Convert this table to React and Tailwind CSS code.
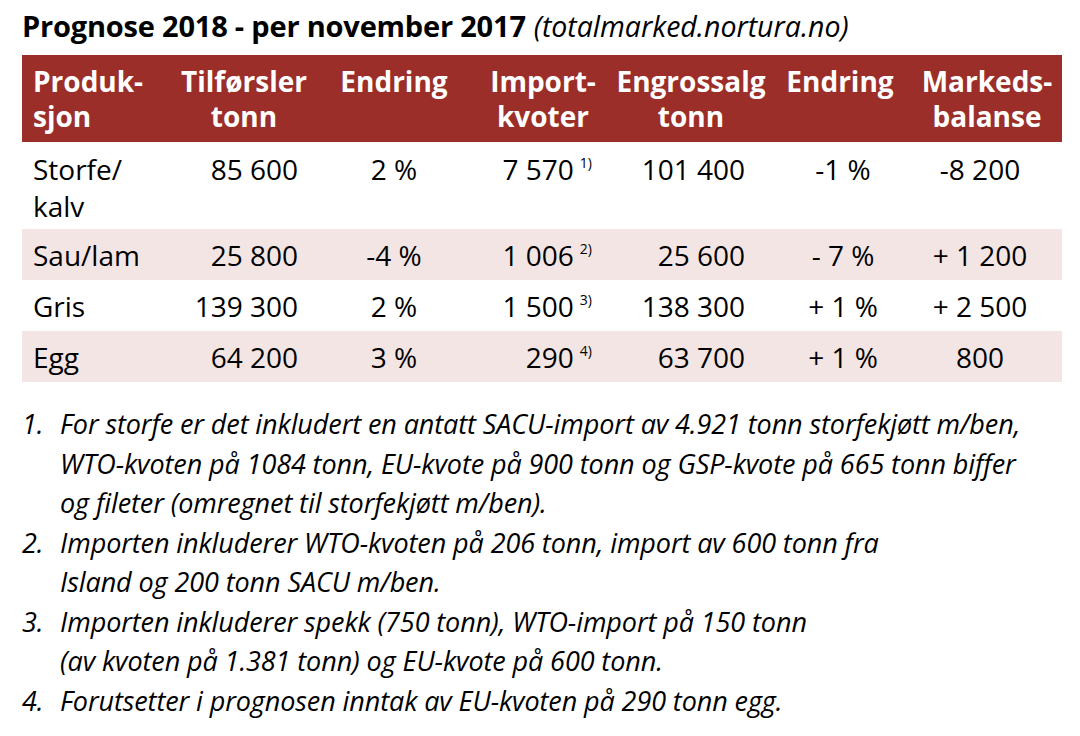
import React from 'react';

const cols = 'grid grid-cols-[150px_144px_156px_142px_154px_144px_150px]';

const rows = [
  { name: ['Storfe/', 'kalv'], tilf: '85 600', endr: '2 %', imp: '7 570', note: '1)', salg: '101 400', endr2: '-1 %', bal: '-8 200', tall: true },
  { name: ['Sau/lam'], tilf: '25 800', endr: '-4 %', imp: '1 006', note: '2)', salg: '25 600', endr2: '- 7 %', bal: '+ 1 200', pink: true },
  { name: ['Gris'], tilf: '139 300', endr: '2 %', imp: '1 500', note: '3)', salg: '138 300', endr2: '+ 1 %', bal: '+ 2 500' },
  { name: ['Egg'], tilf: '64 200', endr: '3 %', imp: '290', note: '4)', salg: '63 700', endr2: '+ 1 %', bal: '800', pink: true },
];

const notes = [
  ['For storfe er det inkludert en antatt SACU-import av 4.921 tonn storfekjøtt m/ben,', 'WTO-kvoten på 1084 tonn, EU-kvote på 900 tonn og GSP-kvote på 665 tonn biffer', 'og fileter (omregnet til storfekjøtt m/ben).'],
  ['Importen inkluderer WTO-kvoten på 206 tonn, import av 600 tonn fra', 'Island og 200 tonn SACU m/ben.'],
  ['Importen inkluderer spekk (750 tonn), WTO-import på 150 tonn', '(av kvoten på 1.381 tonn) og EU-kvote på 600 tonn.'],
  ['Forutsetter i prognosen inntak av EU-kvoten på 290 tonn egg.'],
];

export default function App() {
  return (
    <div className="w-[1080px] h-[736px] bg-white text-black font-['Open_Sans',sans-serif] px-[22px] pt-[6px]">
      {/* Tittel */}
      <div className="h-[49px] whitespace-nowrap leading-[40px]">
        <span className="text-[29px] font-bold tracking-[-0.2px]">Prognose 2018 - per november 2017</span>
        <span className="text-[28.5px] italic ml-[8px]">(totalmarked.nortura.no)</span>
      </div>

      {/* Tabell */}
      <div className="w-[1040px]">
        <div className={`${cols} bg-[#9c2e29] text-white font-bold text-[28px] leading-[35px] h-[87px] pt-[9px]`}>
          <div className="pl-[11px]">Produk-<br />sjon</div>
          <div className="text-center">Tilførsler<br />tonn</div>
          <div className="text-center">Endring</div>
          <div className="text-center">Import-<br />kvoter</div>
          <div className="text-center">Engrossalg<br />tonn</div>
          <div className="text-center">Endring</div>
          <div className="text-center">Markeds-<br />balanse</div>
        </div>

        {rows.map((r, i) => (
          <div
            key={i}
            className={`${cols} text-[28px] leading-[37px] ${r.pink ? 'bg-[#f4e5e5]' : ''} ${r.tall ? 'h-[87px] pt-[9px]' : 'h-[51px] pt-[8px]'}`}
          >
            <div className="pl-[11px]">
              {r.name.map((n, j) => (
                <div key={j}>{n}</div>
              ))}
            </div>
            <div className="text-right pr-[18px]">{r.tilf}</div>
            <div className="text-center">{r.endr}</div>
            <div className="text-right pr-[22px] whitespace-nowrap">
              {r.imp}
              <sup className="text-[14px] ml-[6px] top-[-12px]">{r.note}</sup>
            </div>
            <div className="text-right pr-[23px]">{r.salg}</div>
            <div className="text-center pl-[6px]">{r.endr2}</div>
            <div className="text-center pr-[14px]">{r.bal}</div>
          </div>
        ))}
      </div>

      {/* Fotnoter */}
      <div className="mt-[22px] italic text-[27px] leading-[39.5px] tracking-[-0.1px]">
        {notes.map((lines, i) => (
          <div key={i} className="flex">
            <div className="w-[38px] shrink-0">{i + 1}.</div>
            <div className="whitespace-nowrap">
              {lines.map((l, j) => (
                <div key={j}>{l}</div>
              ))}
            </div>
          </div>
        ))}
      </div>
    </div>
  );
}
